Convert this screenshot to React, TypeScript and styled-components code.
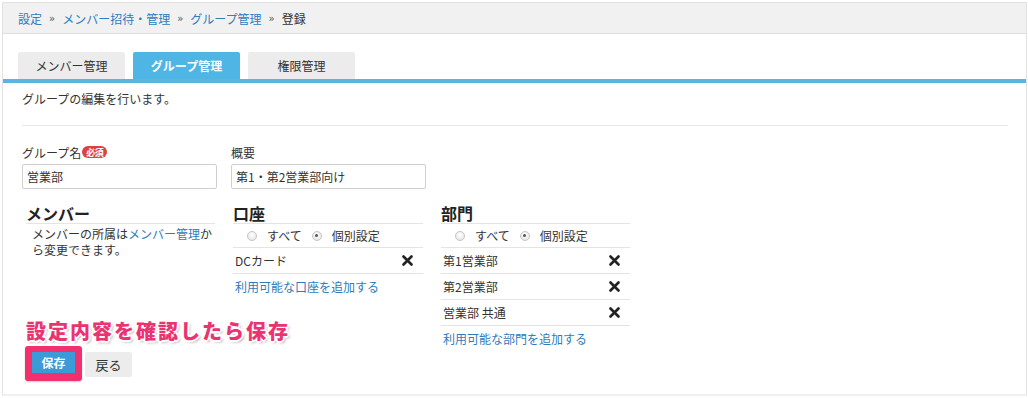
import React from "react";
import styled, { createGlobalStyle } from "styled-components";

const Global = createGlobalStyle`
  html, body { margin: 0; padding: 0; background: #fff; }
  body {
    font-family: "Noto Sans CJK JP", "Liberation Sans", sans-serif;
    font-size: 12px;
    color: #333;
  }
  * { box-sizing: border-box; }
`;

const Page = styled.div`
  margin: 2px 1px 0 2px;
  height: 394px;
  border: 1px solid #e2e2e2;
  border-bottom: 2px solid #f0f0f0;
  display: flex;
  flex-direction: column;
`;

const Breadcrumb = styled.div`
  height: 31px;
  background: #f1f1f1;
  border-bottom: 1px solid #dedede;
  display: flex;
  align-items: center;
  padding-left: 15px;
  gap: 7px;
  font-size: 12px;
`;

const Crumb = styled.a`
  color: #2f7bbd;
  text-decoration: none;
`;

const Sep = styled.span`
  color: #555;
  font-size: 10px;
  font-family: "DejaVu Sans", sans-serif;
`;

const Current = styled.span`
  color: #333;
`;

const TabBar = styled.div`
  margin-top: 18px;
  display: flex;
  gap: 8px;
  padding-left: 15px;
  border-bottom: 4px solid #5bb6df;
`;

const Tab = styled.div<{ $active?: boolean }>`
  width: 107px;
  height: 27px;
  display: flex;
  align-items: center;
  justify-content: center;
  border-radius: 2px 2px 0 0;
  font-size: 12px;
  background: ${(p) => (p.$active ? "#4fb5e5" : "#ececec")};
  color: ${(p) => (p.$active ? "#fff" : "#333")};
  font-weight: ${(p) => (p.$active ? 700 : 400)};
`;

const Body = styled.div`
  padding: 0 18px 0 19px;
`;

const Desc = styled.p`
  margin: 8px 0 0 0;
  line-height: 16px;
  font-size: 12px;
`;

const Rule = styled.hr`
  border: none;
  border-top: 1px solid #e9e9e9;
  margin: 18px 0 0 0;
`;

const FieldRow = styled.div`
  display: flex;
  gap: 14px;
  margin-top: 18px;
`;

const Field = styled.div`
  width: 195px;
  display: flex;
  flex-direction: column;
`;

const Label = styled.label`
  display: flex;
  align-items: center;
  height: 16px;
  font-size: 12px;
  margin-bottom: 4px;
`;

const Badge = styled.span`
  display: inline-flex;
  align-items: center;
  justify-content: center;
  background: #d9453d;
  color: #fff;
  font-size: 9px;
  font-weight: 700;
  border-radius: 6px;
  height: 12px;
  width: 25px;
  margin-left: 1px;
  letter-spacing: -0.5px;
`;

const Input = styled.div`
  height: 25px;
  border: 1px solid #cfcfcf;
  border-radius: 2px;
  padding: 0 4px;
  display: flex;
  align-items: center;
  font-size: 12px;
  color: #333;
`;

const Sections = styled.div`
  display: grid;
  grid-template-columns: 189px 190px 189px;
  column-gap: 18px;
  margin-top: 15px;
  margin-left: 4px;
  align-items: start;
`;

const Section = styled.div`
  display: flex;
  flex-direction: column;
`;

const SectionTitle = styled.h3`
  margin: 0;
  font-size: 16px;
  font-weight: 700;
  line-height: 18px;
  height: 20px;
  border-bottom: 1px solid #e4e4e4;
  color: #222;
  padding-left: 0;
`;

const Note = styled.div`
  padding: 2px 0 0 6px;
  line-height: 16px;
  font-size: 12px;
`;

const Link = styled.a`
  color: #2f7bbd;
  text-decoration: none;
`;

const RadioRow = styled.div`
  height: 24px;
  display: flex;
  align-items: center;
  padding-left: 14px;
  border-bottom: 1px solid #e4e4e4;
  font-size: 12px;
`;

const RadioItem = styled.span`
  display: inline-flex;
  align-items: center;
  gap: 10px;
  margin-right: 10px;
`;

const Radio = styled.span<{ $checked?: boolean }>`
  width: 10px;
  height: 10px;
  border-radius: 50%;
  border: 1px solid #c4c4c4;
  background: radial-gradient(circle at 50% 35%, #fff, #e2e2e2);
  position: relative;
  &::after {
    content: "";
    display: ${(p) => (p.$checked ? "block" : "none")};
    position: absolute;
    left: 2.5px;
    top: 2.5px;
    width: 3px;
    height: 3px;
    border-radius: 50%;
    background: #555;
  }
`;

const ItemRow = styled.div`
  height: 26px;
  display: flex;
  align-items: center;
  justify-content: space-between;
  padding: 0 10px 0 2px;
  border-bottom: 1px solid #e4e4e4;
  font-size: 12px;
`;

const AddLink = styled(Link)`
  padding: 5px 0 0 2px;
  line-height: 16px;
`;

const Actions = styled.div`
  position: relative;
  display: flex;
  align-items: flex-start;
  gap: 10px;
  margin-top: 5px;
  margin-left: 10px;
`;

const Annotation = styled.div`
  position: absolute;
  left: -6px;
  top: -32px;
  white-space: nowrap;
  font-size: 20px;
  font-weight: 900;
  line-height: 22px;
  letter-spacing: 2px;
  color: #ea3472;
  text-shadow:
    -2px 0 #fff, 2px 0 #fff, 0 -2px #fff, 0 2px #fff,
    -1px -1px #fff, 1px 1px #fff, -1px 1px #fff, 1px -1px #fff,
    2px 2px 3px rgba(0, 0, 0, 0.35);
`;

const Highlighted = styled.div`
  position: relative;
  z-index: 0;
  &::before {
    content: "";
    position: absolute;
    inset: -6px -7px -8px -7px;
    background: #f2306f;
    border-radius: 3px;
    box-shadow: 0 1px 2px rgba(0, 0, 0, 0.2);
    z-index: -1;
  }
`;

const PrimaryButton = styled.button`
  width: 43px;
  height: 21px;
  border: none;
  background: #3b9ad8;
  color: #fff;
  font-weight: 700;
  font-size: 12px;
  font-family: inherit;
  padding: 0;
  display: flex;
  align-items: center;
  justify-content: center;
`;

const SecondaryButton = styled.button`
  width: 47px;
  height: 25px;
  border: none;
  border-radius: 2px;
  background: #ececec;
  color: #333;
  font-size: 13px;
  font-family: inherit;
  padding: 0;
  display: flex;
  align-items: center;
  justify-content: center;
`;

const Remove = () => (
  <svg width="11" height="11" viewBox="0 0 11 11" aria-hidden="true">
    <path d="M1.5 1.5 L9.5 9.5 M9.5 1.5 L1.5 9.5" stroke="#222" strokeWidth="2.6" strokeLinecap="round" />
  </svg>
);

const RadioGroup = () => (
  <RadioRow>
    <RadioItem>
      <Radio />
      すべて
    </RadioItem>
    <RadioItem>
      <Radio $checked />
      個別設定
    </RadioItem>
  </RadioRow>
);

export default function App() {
  return (
    <>
      <Global />
      <Page>
        <Breadcrumb>
          <Crumb>設定</Crumb>
          <Sep>»</Sep>
          <Crumb>メンバー招待・管理</Crumb>
          <Sep>»</Sep>
          <Crumb>グループ管理</Crumb>
          <Sep>»</Sep>
          <Current>登録</Current>
        </Breadcrumb>
        <TabBar>
          <Tab>メンバー管理</Tab>
          <Tab $active>グループ管理</Tab>
          <Tab>権限管理</Tab>
        </TabBar>
        <Body>
          <Desc>グループの編集を行います。</Desc>
          <Rule />
          <FieldRow>
            <Field>
              <Label>
                グループ名<Badge>必須</Badge>
              </Label>
              <Input>営業部</Input>
            </Field>
            <Field>
              <Label>概要</Label>
              <Input>第1・第2営業部向け</Input>
            </Field>
          </FieldRow>
          <Sections>
            <Section>
              <SectionTitle>メンバー</SectionTitle>
              <Note>
                メンバーの所属は<Link>メンバー管理</Link>か
                <br />
                ら変更できます。
              </Note>
            </Section>
            <Section>
              <SectionTitle>口座</SectionTitle>
              <RadioGroup />
              <ItemRow>
                DCカード
                <Remove />
              </ItemRow>
              <AddLink>利用可能な口座を追加する</AddLink>
            </Section>
            <Section>
              <SectionTitle>部門</SectionTitle>
              <RadioGroup />
              <ItemRow>
                第1営業部
                <Remove />
              </ItemRow>
              <ItemRow>
                第2営業部
                <Remove />
              </ItemRow>
              <ItemRow>
                営業部 共通
                <Remove />
              </ItemRow>
              <AddLink>利用可能な部門を追加する</AddLink>
            </Section>
          </Sections>
          <Actions>
            <Annotation>設定内容を確認したら保存</Annotation>
            <Highlighted>
              <PrimaryButton>保存</PrimaryButton>
            </Highlighted>
            <SecondaryButton>戻る</SecondaryButton>
          </Actions>
        </Body>
      </Page>
    </>
  );
}
